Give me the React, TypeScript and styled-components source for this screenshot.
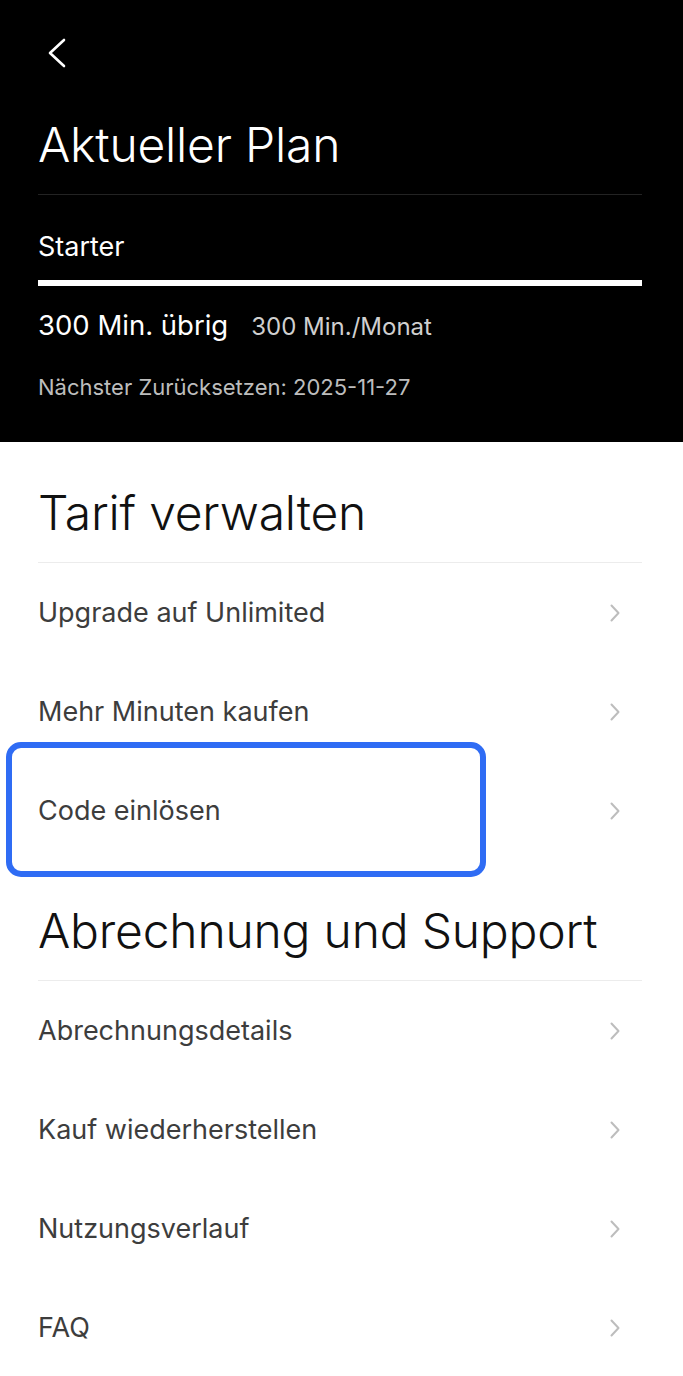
import React from "react";
import styled, { createGlobalStyle } from "styled-components";

const Global = createGlobalStyle`
  html, body { margin: 0; padding: 0; background: #fff; }
  body { font-family: Inter, "Noto Sans", sans-serif; -webkit-font-smoothing: antialiased; }
  * { box-sizing: border-box; }
`;

const Page = styled.div`
  width: 683px;
  min-height: 1376px;
  background: #fff;
  display: flex;
  flex-direction: column;
`;

const Header = styled.header`
  background: #000;
  color: #fff;
  height: 442px;
  padding: 37px 41px 0 38px;
  display: flex;
  flex-direction: column;
`;

const BackButton = styled.button`
  all: unset;
  width: 24px;
  height: 32px;
  margin-left: 8px;
  display: flex;
`;

const Title = styled.h1<{ $dark?: boolean }>`
  margin: 0;
  font-size: 48px;
  line-height: 58px;
  font-weight: 300;
  letter-spacing: -0.2px;
  color: ${(p) => (p.$dark ? "#111" : "#fff")};
`;

const HeaderTitle = styled(Title)`
  margin-top: 47px;
`;

const Divider = styled.div<{ $dark?: boolean }>`
  height: 1px;
  margin-top: 20px;
  background: ${(p) => (p.$dark ? "#232323" : "#ececec")};
`;

const PlanName = styled.div`
  margin-top: 36px;
  font-size: 27px;
  line-height: 32px;
  font-weight: 400;
`;

const Bar = styled.div`
  margin-top: 17px;
  height: 6px;
  background: #fff;
`;

const MinutesRow = styled.div`
  margin-top: 23px;
  display: flex;
  align-items: baseline;
  gap: 23px;
`;

const Remaining = styled.span`
  font-size: 27.5px;
  line-height: 32px;
`;

const Quota = styled.span`
  font-size: 24px;
  line-height: 28px;
  color: #cfcfcf;
`;

const ResetInfo = styled.div`
  margin-top: 32px;
  font-size: 22px;
  line-height: 28px;
  color: #bdbdbd;
`;

const Section = styled.section`
  padding: 42px 41px 0 38px;
  display: flex;
  flex-direction: column;
`;

const List = styled.ul`
  margin: 0;
  padding: 0;
  list-style: none;
`;

const Row = styled.li`
  position: relative;
  height: 99px;
  display: flex;
  align-items: center;
  justify-content: space-between;
  padding-right: 22px;
`;

const RowLabel = styled.span`
  font-size: 27px;
  line-height: 32px;
  color: #3d3d3d;
`;

const FocusRing = styled.div`
  position: absolute;
  left: -32px;
  top: -19px;
  width: 480px;
  height: 135px;
  border: 6px solid #2f6cf4;
  border-radius: 15px;
  pointer-events: none;
`;

const Chevron = () => (
  <svg width="10" height="18" viewBox="0 0 10 18" fill="none">
    <path d="M1.5 1.5 L8.5 9 L1.5 16.5" stroke="#bdbdbd" strokeWidth="2" strokeLinecap="round" strokeLinejoin="round" />
  </svg>
);

type Item = { label: string; focused?: boolean };

const ListSection = ({ title, items }: { title: string; items: Item[] }) => (
  <Section>
    <Title $dark>{title}</Title>
    <Divider />
    <List>
      {items.map((it) => (
        <Row key={it.label}>
          <RowLabel>{it.label}</RowLabel>
          <Chevron />
          {it.focused && <FocusRing />}
        </Row>
      ))}
    </List>
  </Section>
);

export default function App() {
  return (
    <Page>
      <Global />
      <Header>
        <BackButton aria-label="Zurück">
          <svg width="24" height="32" viewBox="0 0 24 32" fill="none">
            <path d="M18 3 L4 16 L18 29" stroke="#fff" strokeWidth="2.6" strokeLinecap="round" strokeLinejoin="round" />
          </svg>
        </BackButton>
        <HeaderTitle>Aktueller Plan</HeaderTitle>
        <Divider $dark />
        <PlanName>Starter</PlanName>
        <Bar />
        <MinutesRow>
          <Remaining>300 Min. übrig</Remaining>
          <Quota>300 Min./Monat</Quota>
        </MinutesRow>
        <ResetInfo>Nächster Zurücksetzen: 2025-11-27</ResetInfo>
      </Header>
      <ListSection
        title="Tarif verwalten"
        items={[
          { label: "Upgrade auf Unlimited" },
          { label: "Mehr Minuten kaufen" },
          { label: "Code einlösen", focused: true },
        ]}
      />
      <ListSection
        title="Abrechnung und Support"
        items={[
          { label: "Abrechnungsdetails" },
          { label: "Kauf wiederherstellen" },
          { label: "Nutzungsverlauf" },
          { label: "FAQ" },
        ]}
      />
    </Page>
  );
}
